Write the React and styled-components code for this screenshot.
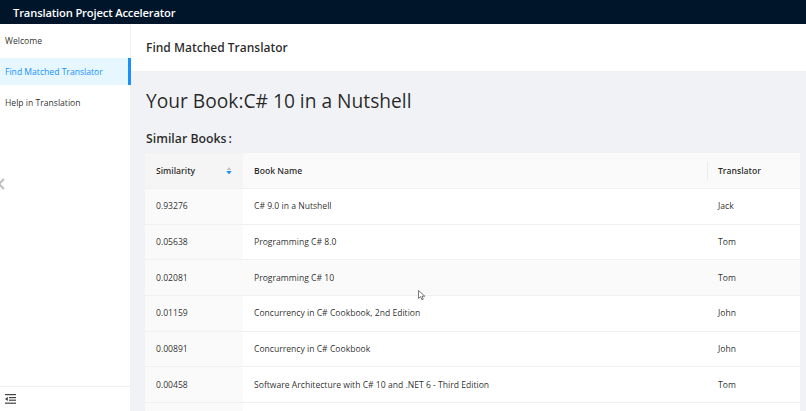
import React from "react";
import styled, { createGlobalStyle } from "styled-components";

const Global = createGlobalStyle`
  html, body { margin: 0; padding: 0; }
  body {
    font-family: "Open Sans", "Noto Sans", "Liberation Sans", sans-serif;
    color: rgba(0,0,0,0.85);
    background: #f0f2f5;
    overflow: hidden;
  }
  * { box-sizing: border-box; }
`;

const Page = styled.div`
  width: 806px;
  height: 411px;
  display: flex;
  flex-direction: column;
  overflow: hidden;
`;

const TopBar = styled.header`
  height: 24px;
  flex: none;
  background: #001529;
  color: #fff;
  display: flex;
  align-items: center;
  padding: 0 13px;
  font-size: 11.2px;
  font-weight: 600;
  letter-spacing: -0.15px;
`;

const Body = styled.div`
  flex: 1;
  display: flex;
  min-height: 0;
`;

const Sider = styled.aside`
  position: relative;
  width: 131px;
  flex: none;
  background: #fff;
  border-right: 1px solid #f0f0f0;
  display: flex;
  flex-direction: column;
`;

const Menu = styled.nav`
  flex: 1;
  display: flex;
  flex-direction: column;
  gap: 4px;
  padding-top: 3px;
`;

const MenuItem = styled.div`
  height: 27px;
  display: flex;
  align-items: center;
  padding-left: 5px;
  font-size: 8.6px;
  color: ${(p) => (p.$active ? "#1890ff" : "rgba(0,0,0,0.85)")};
  background: ${(p) => (p.$active ? "#e6f7ff" : "transparent")};
  border-right: 3px solid ${(p) => (p.$active ? "#1890ff" : "transparent")};
  margin-right: -1px;
`;

const Trigger = styled.div`
  height: 25px;
  flex: none;
  border-top: 1px solid #f0f0f0;
  display: flex;
  align-items: center;
  padding-left: 5px;
  color: rgba(0,0,0,0.75);
`;

const EdgeArrow = styled.div`
  position: absolute;
  left: -4px;
  top: 149px;
  color: #bfbfbf;
`;

const Main = styled.main`
  flex: 1;
  display: flex;
  flex-direction: column;
  min-width: 0;
  position: relative;
`;

const PageHeader = styled.div`
  height: 47px;
  flex: none;
  background: #fff;
  display: flex;
  align-items: center;
  padding-left: 15px;
  font-size: 12px;
  font-weight: 600;
`;

const Content = styled.div`
  flex: 1;
  padding: 14px 6px 0 14px;
  overflow: hidden;
`;

const Title = styled.h1`
  margin: 0;
  font-size: 19.2px;
  font-weight: 500;
  line-height: 32px;
  padding-left: 1px;
`;

const SubTitle = styled.h2`
  margin: 12px 0 0;
  font-size: 12.3px;
  font-weight: 600;
  line-height: 20px;
  padding-left: 1px;
`;

const Colon = styled.span`
  margin-left: 2px;
`;

const Table = styled.div`
  margin-top: 4px;
  background: #fff;
  font-size: 8.6px;
`;

const Row = styled.div`
  display: grid;
  grid-template-columns: 98px 1fr 93px;
  height: ${(p) => (p.$head ? "36px" : "35.7px")};
  border-bottom: 1px solid #f0f0f0;
  background: ${(p) => (p.$head ? "#fafafa" : p.$hover ? "#fafafa" : "#fff")};
`;

const Cell = styled.div`
  position: relative;
  display: flex;
  align-items: center;
  justify-content: space-between;
  padding: 0 11px;
  font-weight: ${(p) => (p.$head ? 600 : 400)};
  background: ${(p) => (p.$sorted ? (p.$head ? "#f5f5f5" : "#fafafa") : "transparent")};
  white-space: nowrap;
  ${(p) =>
    p.$divider
      ? `&::before {
    content: "";
    position: absolute;
    left: 0;
    top: 50%;
    width: 1px;
    height: 18px;
    transform: translateY(-50%);
    background: rgba(0,0,0,0.06);
  }`
      : ""}
`;

const Sorter = styled.span`
  display: inline-flex;
  flex-direction: column;
  gap: 1px;
`;

const Cursor = styled.svg`
  position: absolute;
  left: 287px;
  top: 266px;
`;

const rows = [
  ["0.93276", "C# 9.0 in a Nutshell", "Jack"],
  ["0.05638", "Programming C# 8.0", "Tom"],
  ["0.02081", "Programming C# 10", "Tom"],
  ["0.01159", "Concurrency in C# Cookbook, 2nd Edition", "John"],
  ["0.00891", "Concurrency in C# Cookbook", "John"],
  ["0.00458", "Software Architecture with C# 10 and .NET 6 - Third Edition", "Tom"],
  ["", "", ""],
];

export default function App() {
  return (
    <Page>
      <Global />
      <TopBar>Translation Project Accelerator</TopBar>
      <Body>
        <Sider>
          <Menu>
            <MenuItem>Welcome</MenuItem>
            <MenuItem $active>Find Matched Translator</MenuItem>
            <MenuItem>Help in Translation</MenuItem>
          </Menu>
          <EdgeArrow>
            <svg width="10" height="12" viewBox="0 0 10 12">
              <path d="M8 1 L3 6 L8 11" fill="none" stroke="currentColor" strokeWidth="2" />
            </svg>
          </EdgeArrow>
          <Trigger>
            <svg width="11" height="10" viewBox="0 0 11 10">
              <rect x="0" y="0" width="11" height="1.2" fill="currentColor" />
              <rect x="4" y="3" width="7" height="1.2" fill="currentColor" />
              <rect x="4" y="5.6" width="7" height="1.2" fill="currentColor" />
              <rect x="0" y="8.6" width="11" height="1.2" fill="currentColor" />
              <path d="M0 4.9 L2.8 2.8 L2.8 7 Z" fill="currentColor" />
            </svg>
          </Trigger>
        </Sider>
        <Main>
          <PageHeader>Find Matched Translator</PageHeader>
          <Content>
            <Title>Your Book:C# 10 in a Nutshell</Title>
            <SubTitle>
              Similar Books<Colon>:</Colon>
            </SubTitle>
            <Table>
              <Row $head>
                <Cell $head $sorted>
                  Similarity
                  <Sorter>
                    <svg width="6" height="3.5" viewBox="0 0 6 4">
                      <path d="M0 4 L3 0 L6 4 Z" fill="#bfbfbf" />
                    </svg>
                    <svg width="6" height="3.5" viewBox="0 0 6 4">
                      <path d="M0 0 L3 4 L6 0 Z" fill="#1890ff" />
                    </svg>
                  </Sorter>
                </Cell>
                <Cell $head>Book Name</Cell>
                <Cell $head $divider>Translator</Cell>
              </Row>
              {rows.map((r, i) => (
                <Row key={i} $hover={i === 2}>
                  <Cell $sorted>{r[0]}</Cell>
                  <Cell>{r[1]}</Cell>
                  <Cell>{r[2]}</Cell>
                </Row>
              ))}
            </Table>
          </Content>
          <Cursor width="8" height="11" viewBox="0 0 8 11">
            <path d="M0.5 0.5 L0.5 8.5 L2.6 6.6 L4 9.8 L5.3 9.2 L4 6.2 L6.8 6.2 Z" fill="#fff" stroke="#555" strokeWidth="0.8" />
          </Cursor>
        </Main>
      </Body>
    </Page>
  );
}
